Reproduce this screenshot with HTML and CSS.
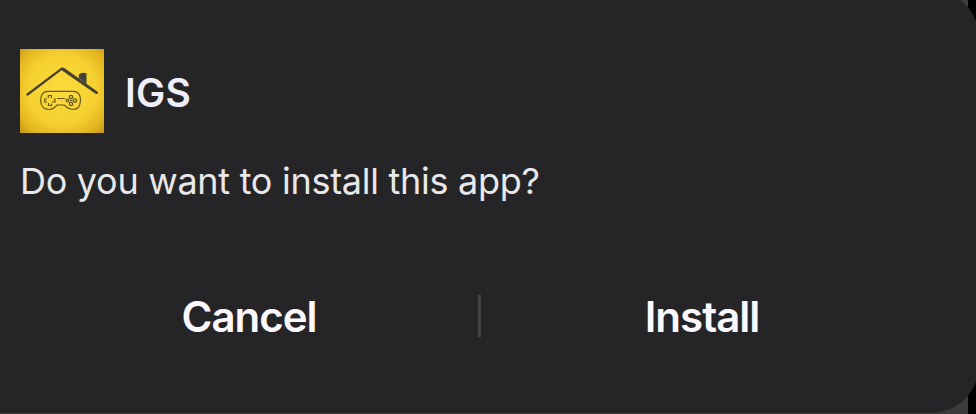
FILE: index.html
```
<!DOCTYPE html>
<html lang="en">
<head>
<meta charset="utf-8">
<title>Install app</title>
<link rel="stylesheet" href="styles.css">
</head>
<body>
<main class="dialog">
  <header class="app">
    <svg class="app-icon" viewBox="0 0 84 84" aria-hidden="true">
      <defs>
        <radialGradient id="gold" cx=".5" cy=".48" r=".75">
          <stop offset="0" stop-color="#fbdb3c"/>
          <stop offset=".55" stop-color="#f5d02f"/>
          <stop offset=".8" stop-color="#e2b41f"/>
          <stop offset="1" stop-color="#bd8c15"/>
        </radialGradient>
      </defs>
      <rect width="84" height="84" fill="url(#gold)"/>
      <path d="M58.800 29V25.500Q61 23 66.500 24.300V35Z" fill="#45413a"/>
      <path d="M7.500 45.500L41.500 19.800" fill="none" stroke="#45402b" stroke-width="2.200" stroke-linecap="round"/>
      <path d="M41.200 18.600Q43 18 45 19.600L78 43Q78.500 45.500 76 45L42 21.600Z" fill="#45402b"/>
      <g fill="none" stroke="#65561d" stroke-width="1.200">
        <path d="M28 42.300H54Q60.500 43 60.500 51C60.500 58 57.500 60.500 52.500 60.500C48 60.500 46 57 44 56H37C35 58 34 60.500 29 60.500C24 60.500 20.700 57 20.700 51.500C20.700 45.500 23 42.300 28 42.300Z"/>
        <path d="M28.300 49V46.500H31.300V49M33.500 50H35V53H32M31.500 54.500V56.500H28.500V54M27 53H24.700V50H27M37 49.500H45"/>
        <circle cx="51" cy="48" r="1.700"/><circle cx="55" cy="51.500" r="1.700"/>
        <circle cx="51" cy="55" r="1.700"/><circle cx="47.500" cy="51.500" r="1.400"/>
        <path d="M50 51.500H52.500"/>
      </g>
    </svg>
    <h1 class="app-name">IGS</h1>
  </header>
  <p class="question">Do you want to install this app?</p>
  <div class="actions">
    <button class="action cancel">Cancel</button>
    <span class="divider"></span>
    <button class="action install">Install</button>
  </div>
</main>
</body>
</html>
```
FILE: styles.css
```
* { box-sizing: border-box; }
body {
  margin: 0;
  height: 414px;
  overflow: hidden;
  background: linear-gradient(90deg, #3c3c3d 968px, #000 968px);
  font-family: Inter, sans-serif;
}
.dialog {
  width: 979px;
  height: 423px;
  margin-top: -10px;
  padding: 59px 19px 0 20px;
  border-radius: 48px;
  border-top-left-radius: 0;
  border-bottom-left-radius: 0;
  background: #252527;
}
.app { display: flex; align-items: center; height: 84px; }
.app-icon { width: 84px; height: 84px; }
.app-name {
  margin: 4px 0 0 21px;
  color: #f0edfc;
  font-size: 39px;
  font-weight: 600;
  line-height: 48px;
  letter-spacing: .3px;
}
.question {
  margin: 24px 0 0;
  color: #e8e8ea;
  font-size: 36px;
  line-height: 48px;
  letter-spacing: -.28px;
  white-space: nowrap;
}
.actions {
  display: grid;
  grid-template-columns: 458px 4px 440px;
  align-items: center;
  height: 44px;
  margin-top: 89px;
}
.action {
  padding: 2px 0 0;
  border: 0;
  background: none;
  color: #fbf9ff;
  font: 600 42px/42px Inter, sans-serif;
  letter-spacing: -1px;
}
.divider { width: 3px; height: 42px; background: #444446; }
```
